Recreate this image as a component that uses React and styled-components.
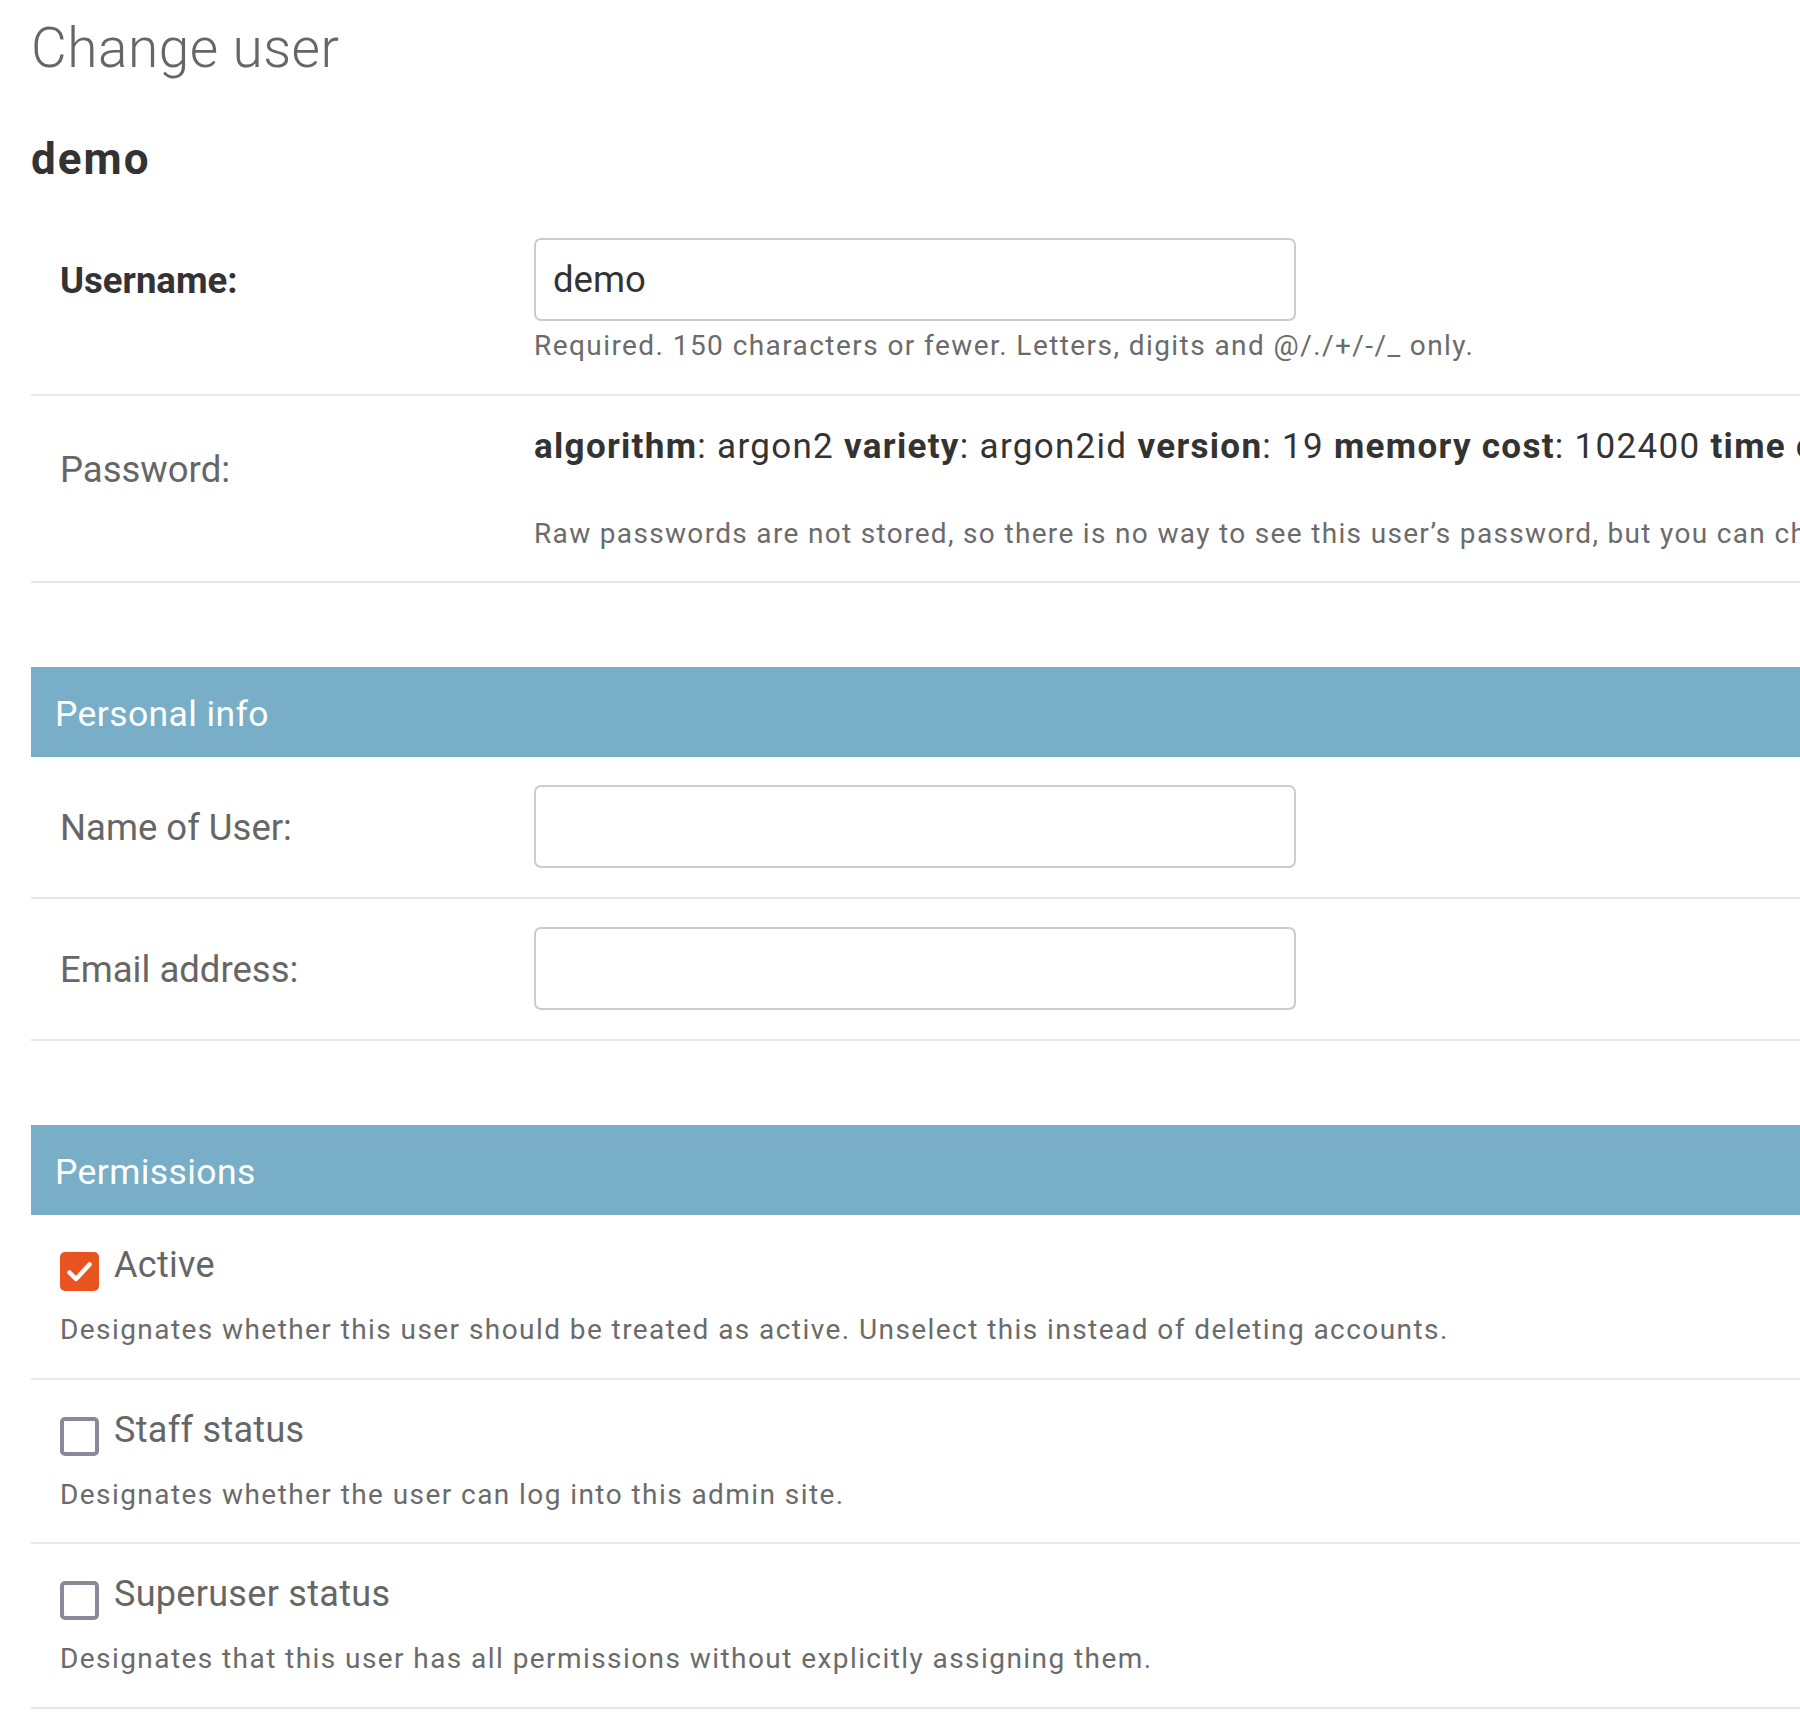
import React from 'react';
import styled, { createGlobalStyle } from 'styled-components';

const GlobalStyle = createGlobalStyle`
  html, body {
    margin: 0;
    padding: 0;
    background: #ffffff;
  }
  body {
    font-family: Roboto, "Open Sans", "Liberation Sans", sans-serif;
    color: #333333;
  }
`;

const Page = styled.div`
  width: 100%;
  min-height: 1727px;
  padding-left: 31px;
  box-sizing: border-box;
  overflow: hidden;
`;

const Title = styled.h1`
  margin: 15px 0 0;
  font-size: 55px;
  line-height: 66px;
  font-weight: 300;
  letter-spacing: 0.5px;
  color: #666666;
`;

const Subtitle = styled.h2`
  margin: 52px 0 24px;
  font-size: 44px;
  line-height: 53px;
  font-weight: 700;
  letter-spacing: 2px;
  color: #333333;
`;

const Fieldset = styled.div`
  margin-top: ${(props) => (props.$module ? '84px' : '0')};
`;

const Band = styled.h2`
  margin: 0;
  height: 90px;
  box-sizing: border-box;
  padding: 5px 24px 0;
  font-size: 35.5px;
  line-height: 85px;
  font-weight: 400;
  letter-spacing: 0.4px;
  color: #ffffff;
  background: #79aec8;
`;

const Row = styled.div`
  display: flex;
  padding: ${(props) => props.$pt || '28px'} 0 ${(props) => props.$pb || '29px'} 29px;
  border-bottom: 2px solid #e8e8e8;
`;

const Label = styled.label`
  flex: 0 0 474px;
  height: 83px;
  box-sizing: border-box;
  padding-top: 3px;
  font-size: 36.5px;
  line-height: 80px;
  font-weight: ${(props) => (props.$bold ? 700 : 400)};
  color: ${(props) => (props.$bold ? '#333333' : '#666666')};
  white-space: nowrap;
`;

const Field = styled.div`
  display: flex;
  flex-direction: column;
  min-width: 0;
`;

const Input = styled.input`
  width: 762px;
  height: 83px;
  box-sizing: border-box;
  padding: 0 17px;
  border: 2px solid #cccccc;
  border-radius: 7px;
  font-family: Roboto, "Open Sans", sans-serif;
  font-size: 36.5px;
  color: #333333;
  background: #ffffff;
  outline: none;
`;

const Readonly = styled.div`
  font-size: 35px;
  line-height: 40px;
  letter-spacing: 1.3px;
  color: #333333;
  white-space: nowrap;

  strong {
    font-weight: 700;
  }
`;

const Help = styled.div`
  margin-top: ${(props) => props.$mt || '6px'};
  font-size: 28px;
  line-height: ${(props) => props.$lh || '38px'};
  letter-spacing: ${(props) => props.$ls || '1.43px'};
  color: #6b6b6b;
  white-space: nowrap;
`;

const CheckRow = styled.div`
  padding: 28px 0 27.5px 29px;
  border-bottom: 2px solid #e8e8e8;
`;

const CheckLine = styled.div`
  display: flex;
  align-items: flex-start;
  gap: 15px;
`;

const Box = styled.span`
  flex: 0 0 39px;
  height: 39px;
  margin-top: 9px;
  box-sizing: border-box;
  border-radius: 5px;
  border: ${(props) => (props.$checked ? 'none' : '4px solid #8a889a')};
  background: ${(props) => (props.$checked ? '#e9531f' : '#ffffff')};
  display: flex;
  align-items: center;
  justify-content: center;
`;

const CheckLabel = styled.label`
  font-size: 36px;
  line-height: 44px;
  letter-spacing: 0.3px;
  color: #666666;
`;

const Tick = () => (
  <svg width="39" height="39" viewBox="0 0 39 39">
    <path d="M9.5 20.5 L16 27 L29.5 12.5" fill="none" stroke="#ffffff" strokeWidth="4.5" strokeLinecap="round" strokeLinejoin="round" />
  </svg>
);

const CheckField = ({ checked, label, help }) => (
  <CheckRow>
    <CheckLine>
      <Box $checked={checked}>{checked && <Tick />}</Box>
      <CheckLabel>{label}</CheckLabel>
    </CheckLine>
    <Help $mt="19px" $lh="40px">{help}</Help>
  </CheckRow>
);

const App = () => {
  return (
    <>
      <GlobalStyle />
      <Page>
        <Title>Change user</Title>
        <Subtitle>demo</Subtitle>

        <Fieldset>
          <Row>
            <Label $bold>Username:</Label>
            <Field>
              <Input type="text" defaultValue="demo" />
              <Help>Required. 150 characters or fewer. Letters, digits and @/./+/-/_ only.</Help>
            </Field>
          </Row>
          <Row $pt="31px" $pb="27px">
            <Label>Password:</Label>
            <Field>
              <Readonly>
                <strong>algorithm</strong>: argon2 <strong>variety</strong>: argon2id{' '}
                <strong>version</strong>: 19 <strong>memory cost</strong>: 102400{' '}
                <strong>time cost</strong>: 2 <strong>parallelism</strong>: 8{' '}
                <strong>salt</strong>: Qk3bEF****** <strong>hash</strong>: 9sT2vA**************
              </Readonly>
              <Help $mt="47px" $lh="40px" $ls="1.33px">
                Raw passwords are not stored, so there is no way to see this user’s password, but you can change the password using this form.
              </Help>
            </Field>
          </Row>
        </Fieldset>

        <Fieldset $module>
          <Band>Personal info</Band>
          <Row>
            <Label>Name of User:</Label>
            <Field>
              <Input type="text" />
            </Field>
          </Row>
          <Row>
            <Label>Email address:</Label>
            <Field>
              <Input type="email" />
            </Field>
          </Row>
        </Fieldset>

        <Fieldset $module>
          <Band>Permissions</Band>
          <CheckField
            checked
            label="Active"
            help="Designates whether this user should be treated as active. Unselect this instead of deleting accounts."
          />
          <CheckField
            label="Staff status"
            help="Designates whether the user can log into this admin site."
          />
          <CheckField
            label="Superuser status"
            help="Designates that this user has all permissions without explicitly assigning them."
          />
        </Fieldset>
      </Page>
    </>
  );
};

export default App;
